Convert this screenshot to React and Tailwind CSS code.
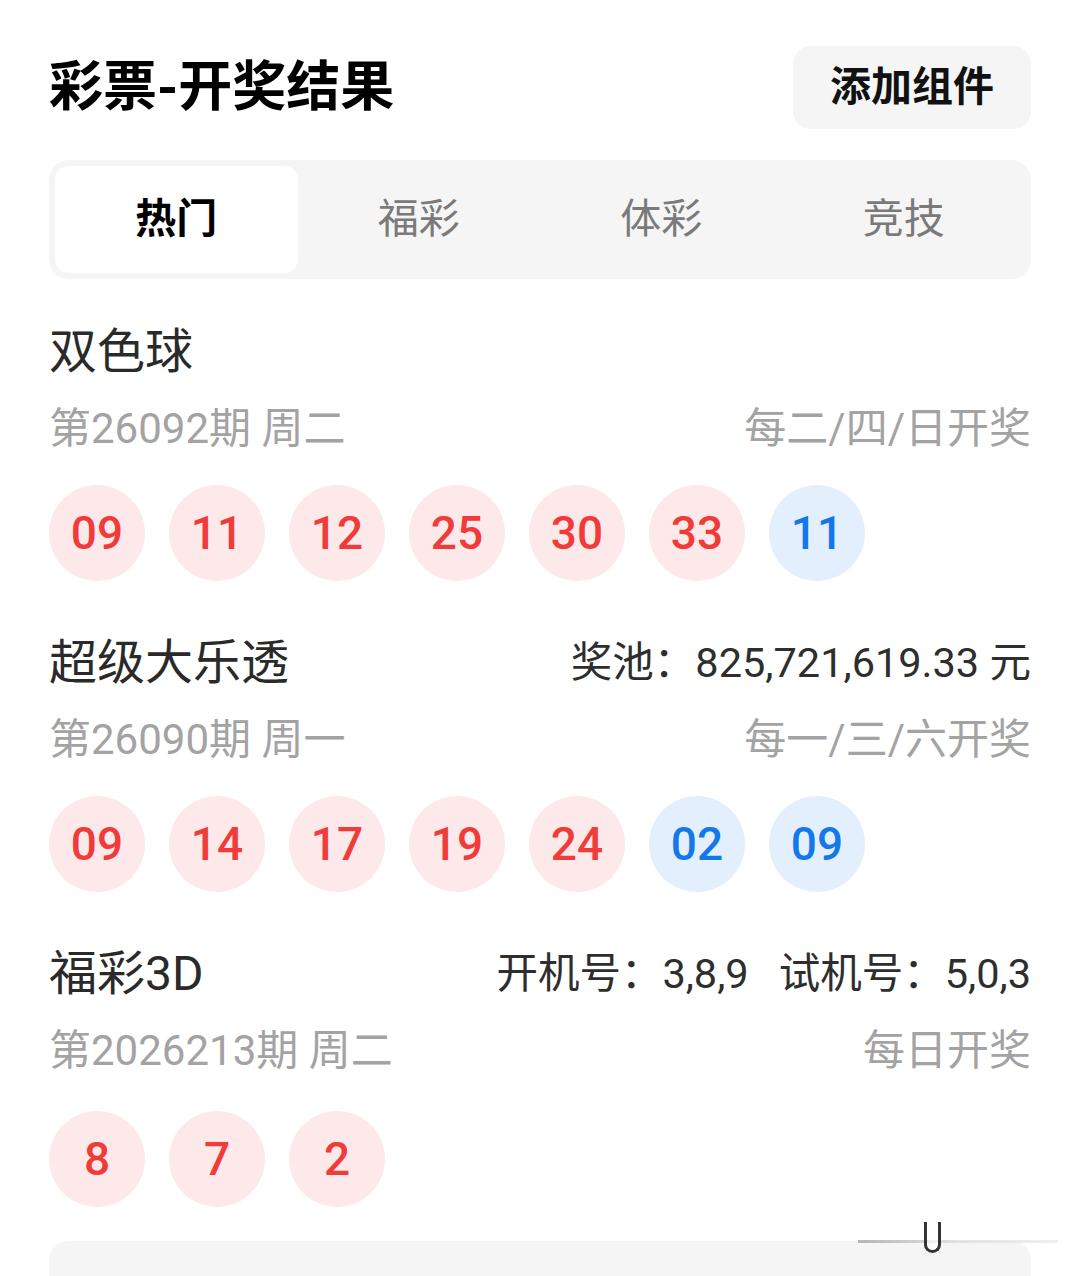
import { useState } from 'react';

const tabs = ['热门', '福彩', '体彩', '竞技'];

const draws = [
  {
    name: '双色球',
    extra: null,
    issue: '第26092期 周二',
    schedule: '每二/四/日开奖',
    red: ['09', '11', '12', '25', '30', '33'],
    blue: ['11'],
  },
  {
    name: '超级大乐透',
    extra: ['奖池：825,721,619.33 元'],
    issue: '第26090期 周一',
    schedule: '每一/三/六开奖',
    red: ['09', '14', '17', '19', '24'],
    blue: ['02', '09'],
  },
  {
    name: '福彩3D',
    extra: ['开机号：3,8,9', '试机号：5,0,3'],
    issue: '第2026213期 周二',
    schedule: '每日开奖',
    red: ['8', '7', '2'],
    blue: [],
  },
];

function Ball({ value, blue }) {
  return (
    <div
      className={
        blue
          ? 'flex h-[96px] w-[96px] items-center justify-center rounded-full bg-[#e3effc] text-[46px] font-medium text-[#1378ea]'
          : 'flex h-[96px] w-[96px] items-center justify-center rounded-full bg-[#fde9e9] text-[46px] font-medium text-[#f03b3b]'
      }
    >
      {value}
    </div>
  );
}

function DrawSection({ draw, last }) {
  return (
    <section>
      <div className="flex h-[60px] items-center justify-between">
        <h2 className="text-[48px] text-[#2a2a2a]">{draw.name}</h2>
        {draw.extra && (
          <div className="flex gap-[30px] text-[41.5px] text-[#2e2e2e]">
            {draw.extra.map((t) => (
              <span key={t}>{t}</span>
            ))}
          </div>
        )}
      </div>
      <div className="mt-[21px] flex h-[50px] items-center justify-between text-[42px] text-[#a3a3a3]">
        <span>{draw.issue}</span>
        <span>{draw.schedule}</span>
      </div>
      <div className={last ? 'mt-[36px] flex gap-[24px]' : 'mt-[32px] flex gap-[24px]'}>
        {draw.red.map((n, i) => (
          <Ball key={'r' + i} value={n} />
        ))}
        {draw.blue.map((n, i) => (
          <Ball key={'b' + i} value={n} blue />
        ))}
      </div>
    </section>
  );
}

export default function App() {
  const [active, setActive] = useState(0);

  return (
    <div
      className="relative h-[1276px] overflow-hidden bg-white px-[49px] pt-[46px]"
      style={{ fontFamily: 'Roboto, "Noto Sans CJK SC", sans-serif' }}
    >
      <header className="flex h-[83px] items-center justify-between">
        <h1 className="text-[54px] font-bold text-black">彩票-开奖结果</h1>
        <button className="flex h-[83px] w-[238px] items-center justify-center rounded-[18px] bg-[#f5f5f5] text-[41px] font-bold text-[#111]">
          添加组件
        </button>
      </header>

      <nav className="mt-[31px] grid h-[119px] grid-cols-4 rounded-[20px] bg-[#f5f5f5] p-[6px]">
        {tabs.map((tab, i) => (
          <button
            key={tab}
            onClick={() => setActive(i)}
            className={
              active === i
                ? 'rounded-[14px] bg-white text-[41px] font-bold text-black'
                : 'text-[41px] text-[#7a7a7a]'
            }
          >
            {tab}
          </button>
        ))}
      </nav>

      <div className="mt-[43px] flex flex-col gap-[52px]">
        {draws.map((d, i) => (
          <DrawSection key={d.name} draw={d} last={i === draws.length - 1} />
        ))}
      </div>

      <div className="mt-[34px] h-[80px] rounded-t-[20px] bg-[#f5f5f5]" />

      {/* scroll indicator */}
      <div className="absolute left-[858px] top-[1240px] h-[3px] w-[200px] bg-gradient-to-r from-[#9a9a9a] via-[#d8d8d8] to-[#e8e8e8] opacity-70" />
      <div className="absolute left-[924px] top-[1222px] h-[31px] w-[17px] rounded-b-full border-x-[3px] border-b-[3px] border-[#333] bg-white/60" />
    </div>
  );
}
